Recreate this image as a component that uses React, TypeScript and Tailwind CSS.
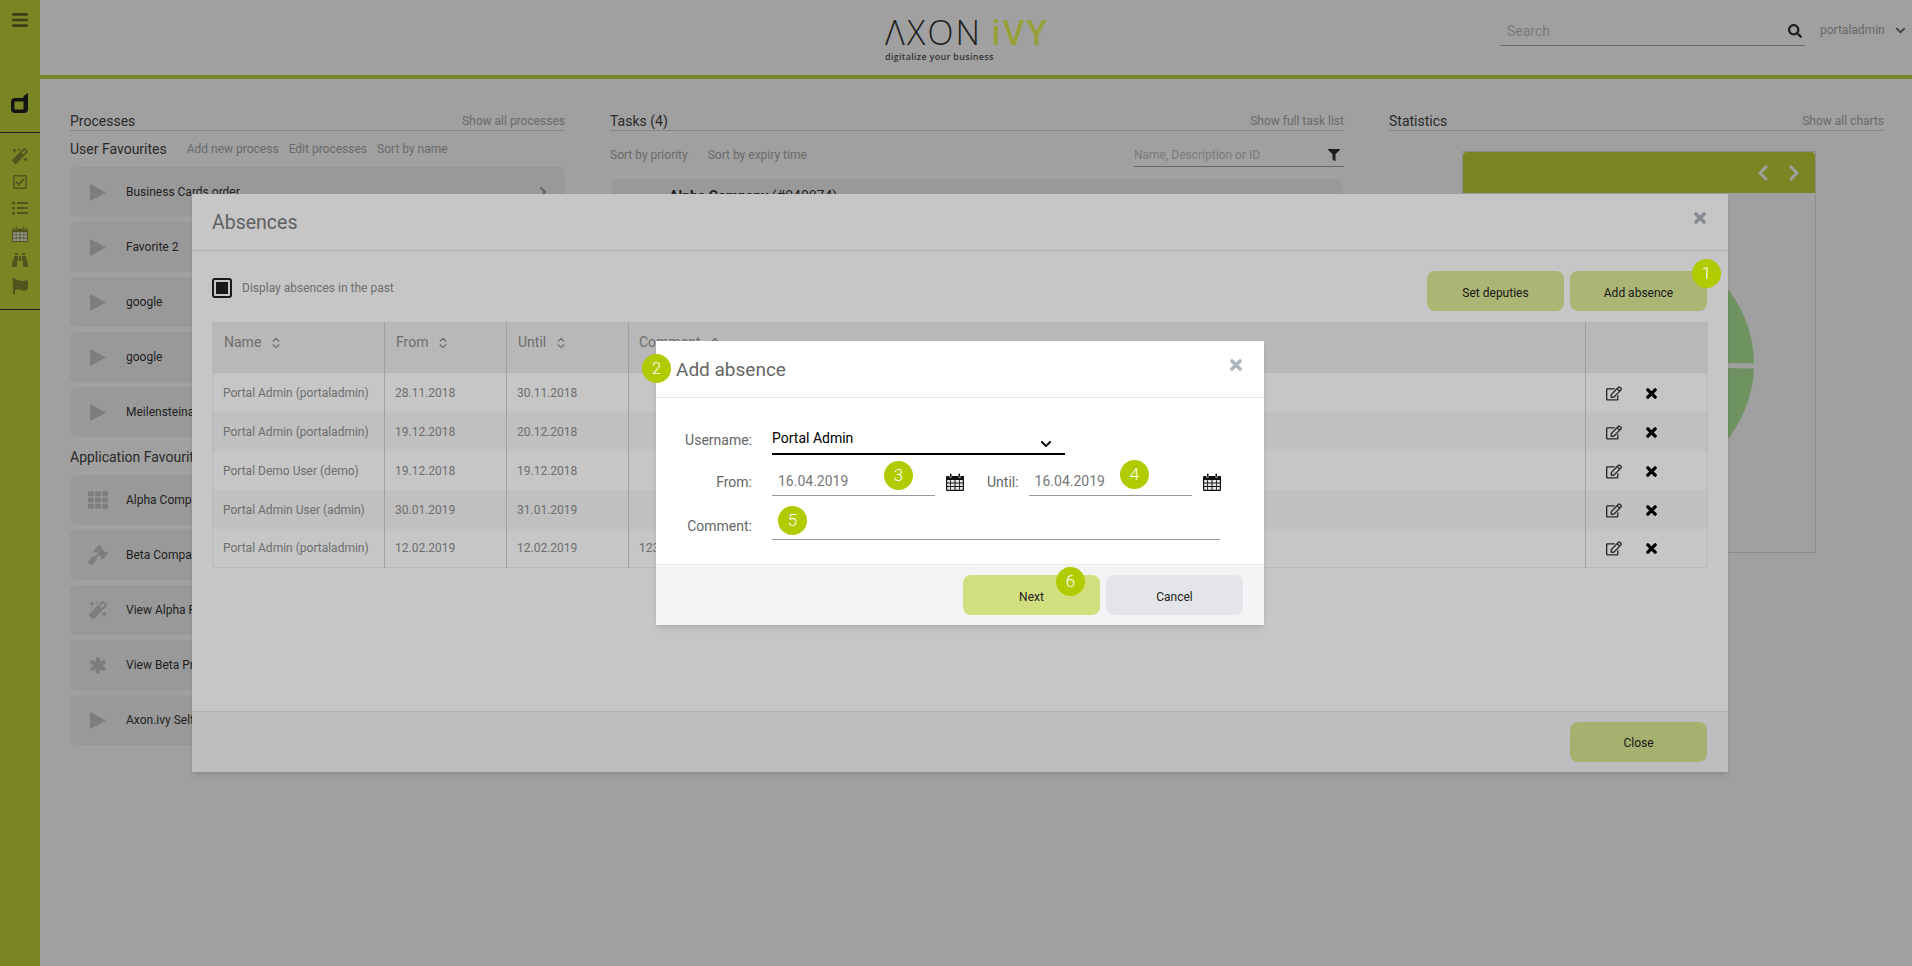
import {
  FaBars,
  FaBinoculars,
  FaChevronDown,
  FaChevronLeft,
  FaChevronRight,
  FaFilter,
  FaFlag,
  FaGavel,
  FaListUl,
  FaMagic,
  FaRegCheckSquare,
  FaRegEdit,
  FaSearch,
  FaTh,
} from "react-icons/fa";
import { ChevronsUpDown } from "lucide-react";
import type { ComponentType } from "react";

type IconProps = { className?: string };

function PlayIcon({ className }: IconProps) {
  return (
    <svg viewBox="0 0 16 17" className={className} fill="currentColor">
      <path d="M0 0 16 8.5 0 17z" />
    </svg>
  );
}

function AsteriskIcon({ className }: IconProps) {
  return (
    <svg viewBox="0 0 16 17" className={className} stroke="currentColor" strokeWidth="4.2" strokeLinecap="round">
      <path d="M8 2.2v12.6M2.5 5.3l11 6.4M13.5 5.3l-11 6.4" />
    </svg>
  );
}

function XIcon({ className }: IconProps) {
  return (
    <svg viewBox="0 0 12 12" className={className} stroke="currentColor" strokeWidth="3.6" strokeLinecap="round">
      <path d="M2 2l8 8M10 2l-8 8" />
    </svg>
  );
}

const USER_FAVOURITES = ["Business Cards order", "Favorite 2", "google", "google", "Meilensteinantrag"];

const APP_FAVOURITES: { label: string; icon: ComponentType<IconProps>; size: string }[] = [
  { label: "Alpha Company", icon: FaTh, size: "w-5 h-5" },
  { label: "Beta Company", icon: FaGavel, size: "w-5 h-5" },
  { label: "View Alpha Processes", icon: FaMagic, size: "w-[18px] h-[18px]" },
  { label: "View Beta Processes", icon: AsteriskIcon, size: "w-4 h-[17px]" },
  { label: "Axon.ivy Self Service", icon: PlayIcon, size: "w-4 h-[17px]" },
];

const ABSENCES = [
  { name: "Portal Admin (portaladmin)", from: "28.11.2018", until: "30.11.2018", comment: "" },
  { name: "Portal Admin (portaladmin)", from: "19.12.2018", until: "20.12.2018", comment: "" },
  { name: "Portal Demo User (demo)", from: "19.12.2018", until: "19.12.2018", comment: "" },
  { name: "Portal Admin User (admin)", from: "30.01.2019", until: "31.01.2019", comment: "" },
  { name: "Portal Admin (portaladmin)", from: "12.02.2019", until: "12.02.2019", comment: "123" },
];

function CalendarIcon({ className }: IconProps) {
  return (
    <svg viewBox="0 0 18 18" className={className} fill="currentColor">
      <path d="M1.5 3h2v1.5h2V3h7v1.5h2V3h2A1 1 0 0 1 18 4v13a1 1 0 0 1-1 1H1a1 1 0 0 1-1-1V4a1 1 0 0 1 1-1z" />
      <rect x="4" y="0.5" width="1.5" height="3.5" rx="0.7" />
      <rect x="12.5" y="0.5" width="1.5" height="3.5" rx="0.7" />
      <path
        fill="#fff"
        fillOpacity="0.9"
        d="M1.2 7h3v2.5h-3zM5 7h3.5v2.5H5zM9.5 7H13v2.5H9.5zM13.8 7h3v2.5h-3zM1.2 10.4h3v2.6h-3zM5 10.4h3.5v2.6H5zM9.5 10.4H13v2.6H9.5zM13.8 10.4h3v2.6h-3zM1.2 14h3v2.8h-3zM5 14h3.5v2.8H5zM9.5 14H13v2.8H9.5zM13.8 14h3v2.8h-3z"
      />
    </svg>
  );
}

function Sidebar() {
  return (
    <aside className="w-10 shrink-0 bg-[#c2d639] text-[#7f8733] flex flex-col">
      <div className="h-[133px] border-b border-[#333] flex flex-col items-center">
        <FaBars className="w-[18px] h-[18px] mt-[11px] text-[#5f6628]" />
        <svg viewBox="0 0 18 20" className="w-[18px] h-5 mt-[64px] text-[#222]" fill="currentColor">
          <path d="M17 0v16a4 4 0 0 1-4 4H4a4 4 0 0 1-4-4V9a4 4 0 0 1 4-4h8.5V3zM4 8.5a.5.5 0 0 0-.5.5v7a.5.5 0 0 0 .5.5h8.5v-8z" />
        </svg>
      </div>
      <div className="h-[177px] border-b border-[#333] flex flex-col items-center pt-[15px] gap-[10px]">
        <FaMagic className="w-4 h-4" />
        <FaRegCheckSquare className="w-4 h-4" />
        <FaListUl className="w-4 h-4" />
        <CalendarIcon className="w-4 h-4" />
        <FaBinoculars className="w-4 h-4" />
        <FaFlag className="w-4 h-4" />
      </div>
    </aside>
  );
}

function Header() {
  return (
    <header className="h-[79px] border-b-4 border-[#c2d639] flex items-start relative shrink-0">
      <div className="absolute left-[845px] top-[12px] leading-none">
        <div className="text-[34px] font-light tracking-[2.2px] text-[#333] font-['Open_Sans',sans-serif] h-[40px] leading-[40px] whitespace-nowrap">
          ΛXON <span className="font-semibold text-[#f0ff58] -ml-[2px]">iVY</span>
        </div>
        <div className="text-[9px] font-semibold tracking-[0.3px] text-[#555] font-['Open_Sans',sans-serif]">
          digitalize your business
        </div>
      </div>
      <div className="ml-auto mt-[17px] flex items-start">
        <div className="w-[305px] h-[29px] border-b border-[#aaa] flex items-center pl-[7px] pr-[3px]">
          <input
            placeholder="Search"
            className="flex-1 min-w-0 text-[14px] outline-none bg-transparent placeholder:text-[#c4c4c4]"
          />
          <FaSearch className="w-[14px] h-[14px] text-[#333]" />
        </div>
        <div className="ml-[15px] w-[92px] h-[26px] flex items-center text-[12px] text-[#a5a5a5]">
          portaladmin
          <FaChevronDown className="w-[11px] h-[11px] ml-[10px] text-[#666]" />
        </div>
      </div>
    </header>
  );
}

function SectionTitle({ title, link }: { title: string; link: string }) {
  return (
    <div className="h-[20px] border-b border-[#d6d6d6] flex items-start justify-between">
      <span className="text-[14px] leading-[20px] text-[#444]">{title}</span>
      <span className="text-[12px] leading-[20px] text-[#a9a9a9]">{link}</span>
    </div>
  );
}

function ProcessRow({
  label,
  icon: Icon,
  size,
  chevron,
}: {
  label: string;
  icon: ComponentType<IconProps>;
  size: string;
  chevron?: boolean;
}) {
  return (
    <div className="h-[50px] rounded-md bg-[#f3f3f3] flex items-center">
      <div className="w-[56px] flex justify-center">
        <Icon className={`${size} text-[#c8c8c8]`} />
      </div>
      <span className="text-[12px] text-[#363636]">{label}</span>
      {chevron && <FaChevronRight className="ml-auto mr-[17px] w-[10px] h-[12px] text-[#999]" />}
    </div>
  );
}

function Dashboard() {
  return (
    <div className="flex gap-[45px] pl-[30px] pr-[28px] pt-[32px]">
      <section className="w-[495px] shrink-0">
        <SectionTitle title="Processes" link="Show all processes" />
        <div className="flex items-center h-[36px] text-[12px] text-[#a9a9a9]">
          <span className="text-[14px] text-[#444] mr-5">User Favourites</span>
          <span className="mr-[10px]">Add new process</span>
          <span className="mr-[10px]">Edit processes</span>
          <span>Sort by name</span>
        </div>
        <div className="flex flex-col gap-[5px]">
          {USER_FAVOURITES.map((label, i) => (
            <ProcessRow key={i} label={label} icon={PlayIcon} size="w-4 h-[17px]" chevron={i === 0} />
          ))}
        </div>
        <div className="text-[14px] text-[#444] h-[38px] pt-[2px] flex items-center">Application Favourites</div>
        <div className="flex flex-col gap-[5px]">
          {APP_FAVOURITES.map((a) => (
            <ProcessRow key={a.label} label={a.label} icon={a.icon} size={a.size} />
          ))}
        </div>
      </section>

      <section className="w-[734px] shrink-0">
        <SectionTitle title="Tasks (4)" link="Show full task list" />
        <div className="flex items-center h-[36px] pt-[12px] text-[12px] text-[#a9a9a9]">
          <span className="mr-5">Sort by priority</span>
          <span>Sort by expiry time</span>
          <div className="ml-auto w-[210px] h-[24px] border-b border-[#a5a5a5] flex items-center justify-between">
            <span className="text-[#c4c4c4]">Name, Description or ID</span>
            <FaFilter className="w-3 h-3 mr-[4px] text-[#333]" />
          </div>
        </div>
        <div className="mt-[12px] mx-[2px] h-[60px] rounded-md bg-[#f3f3f3] pl-[57px] pt-[7px] text-[14px] text-[#363636]">
          <span className="font-bold">Alpha Company</span> (#040874)
        </div>
      </section>

      <section className="w-[495px] shrink-0">
        <SectionTitle title="Statistics" link="Show all charts" />
        <div className="mt-[20px] ml-[73px] w-[354px] h-[402px] border border-[#e0e0e0] flex flex-col">
          <div className="h-[41px] bg-[#c2d639] rounded-t-sm flex items-center justify-end gap-[17px] pr-[14px] text-white shrink-0">
            <FaChevronLeft className="w-[14px] h-[18px]" />
            <FaChevronRight className="w-[14px] h-[18px]" />
          </div>
          <svg viewBox="0 0 352 359" className="w-[352px] h-[359px]">
            <circle cx="170" cy="171" r="121" fill="#b1e99c" />
            <path d="M170 171 L292 173" stroke="#fff" strokeWidth="5" />
          </svg>
        </div>
      </section>
    </div>
  );
}

function SortHeader({ label }: { label: string }) {
  return (
    <span className="flex items-center gap-2">
      {label}
      <ChevronsUpDown className="w-[14px] h-[14px] text-[#8e8e8e]" />
    </span>
  );
}

function AbsencesTable() {
  return (
    <table className="w-[1495px] table-fixed border-collapse mt-[11px] text-[#8e8e8e] border border-[#efefef]">
      <colgroup>
        <col className="w-[172px]" />
        <col className="w-[122px]" />
        <col className="w-[122px]" />
        <col className="w-[957px]" />
        <col className="w-[122px]" />
      </colgroup>
      <thead>
        <tr className="h-[50px] bg-[#ededed] text-[14px] text-left align-top">
          <th className="font-normal px-[11px] pt-[9px] border-r border-[#cfcfcf]">
            <SortHeader label="Name" />
          </th>
          <th className="font-normal px-[11px] pt-[9px] border-r border-[#cfcfcf]">
            <SortHeader label="From" />
          </th>
          <th className="font-normal px-[11px] pt-[9px] border-r border-[#cfcfcf]">
            <SortHeader label="Until" />
          </th>
          <th className="font-normal px-[10px] pt-[9px] border-r border-[#cfcfcf]">
            <SortHeader label="Comment" />
          </th>
          <th />
        </tr>
      </thead>
      <tbody className="text-[12px]">
        {ABSENCES.map((a, i) => (
          <tr key={i} className={`h-[39px] ${i % 2 ? "bg-[#f7f7f7]" : "bg-white"}`}>
            <td className="px-[10px] pt-[1px] border-r border-[#cfcfcf] whitespace-nowrap">{a.name}</td>
            <td className="px-[10px] pt-[1px] border-r border-[#cfcfcf]">{a.from}</td>
            <td className="px-[10px] pt-[1px] border-r border-[#cfcfcf]">{a.until}</td>
            <td className="px-[10px] pt-[1px] border-r border-[#cfcfcf]">{a.comment}</td>
            <td>
              <div className="flex items-center pl-[20px] pt-[2px] gap-[24px]">
                <FaRegEdit className="w-[16px] h-[15px] text-[#333]" />
                <XIcon className="w-[11px] h-[11px] text-black" />
              </div>
            </td>
          </tr>
        ))}
      </tbody>
    </table>
  );
}

function AbsencesDialog() {
  return (
    <div className="absolute left-[192px] top-[194px] w-[1536px] h-[578px] bg-white shadow-md flex flex-col">
      <div className="h-[57px] shrink-0 border-b border-[#e6e6e6] flex items-start justify-between px-5">
        <h2 className="text-[19.5px] leading-[58px] text-[#7d7d7d]">Absences</h2>
        <XIcon className="w-3 h-3 mt-[18px] mr-[2px] text-[#adb5bd]" />
      </div>
      <div className="flex-1 px-5 pt-5">
        <div className="flex items-start justify-between">
          <label className="flex items-center gap-[10px] mt-[7px] text-[12px] text-[#8e8e8e]">
            <span className="w-5 h-5 rounded-[3px] border-2 border-[#222] p-[2px]">
              <span className="block w-full h-full bg-[#222]" />
            </span>
            Display absences in the past
          </label>
          <div className="flex gap-[6px] mr-[1px]">
            <button className="w-[137px] h-10 pt-[3px] rounded-lg bg-[#deeb96] text-[12px] text-[#222]">Set deputies</button>
            <button className="w-[137px] h-10 pt-[3px] rounded-lg bg-[#deeb96] text-[12px] text-[#222]">Add absence</button>
          </div>
        </div>
        <AbsencesTable />
      </div>
      <div className="h-[61px] shrink-0 bg-[#f3f4f6] border-t border-[#e6e6e6] flex justify-end pt-[10px] pr-[21px]">
        <button className="w-[137px] h-10 pt-[2px] rounded-lg bg-[#d8e48f] text-[12px] text-[#222]">Close</button>
      </div>
    </div>
  );
}

function FieldLabel({ children }: { children: string }) {
  return <span className="w-[96px] text-right text-[14px] text-[#666]">{children}</span>;
}

function DateField() {
  return (
    <div className="w-[163px] h-[28px] border-b border-[#999] pl-[6px] text-[14px] text-[#777] leading-[26px]">
      16.04.2019
    </div>
  );
}

function AddAbsenceDialog() {
  return (
    <div className="absolute left-[656px] top-[341px] w-[608px] h-[284px] bg-white shadow-md flex flex-col">
      <div className="h-[57px] shrink-0 border-b border-[#e6e6e6] flex items-start justify-between pl-5 pr-[22px]">
        <h2 className="text-[19px] leading-[57px] text-[#666]">Add absence</h2>
        <XIcon className="w-3 h-3 mt-[18px] text-[#adb5bd]" />
      </div>
      <div className="flex-1 pt-[28px]">
        <div className="flex items-center h-[28px]">
          <FieldLabel>Username:</FieldLabel>
          <div className="ml-5 w-[293px] h-[29px] border-b-2 border-black text-[14px] text-black flex justify-between pr-[12px] leading-[24px]">
            Portal Admin
            <FaChevronDown className="w-[14px] h-[12px] mt-[12px]" />
          </div>
        </div>
        <div className="flex items-center h-[28px] mt-[14px]">
          <FieldLabel>From:</FieldLabel>
          <div className="ml-5">
            <DateField />
          </div>
          <CalendarIcon className="w-[18px] h-[18px] ml-[11px] text-[#111]" />
          <span className="ml-[23px] text-[14px] text-[#666]">Until:</span>
          <div className="ml-[10px]">
            <DateField />
          </div>
          <CalendarIcon className="w-[18px] h-[18px] ml-[11px] text-[#111]" />
        </div>
        <div className="flex items-center h-[28px] mt-[16px]">
          <FieldLabel>Comment:</FieldLabel>
          <div className="ml-5 w-[448px] h-[28px] border-b border-[#999]" />
        </div>
      </div>
      <div className="h-[61px] shrink-0 bg-[#f3f4f6] border-t border-[#e9e9e9] flex justify-end gap-[6px] pt-[10px] pr-[21px]">
        <button className="w-[137px] h-10 pt-[3px] rounded-lg bg-[#d2df7f] text-[12px] text-[#222]">Next</button>
        <button className="w-[137px] h-10 pt-[3px] rounded-lg bg-[#e4e5e8] text-[12px] text-[#222]">Cancel</button>
      </div>
    </div>
  );
}

function Badge({ n, className }: { n: number; className: string }) {
  return (
    <span
      className={`absolute w-[29px] h-[29px] rounded-full bg-[#b0cb00] text-white text-[17px] font-light flex items-center justify-center ${className}`}
    >
      {n}
    </span>
  );
}

export default function App() {
  return (
    <div className="relative w-full h-screen overflow-hidden bg-white flex font-['Roboto',sans-serif]">
      <Sidebar />
      <main className="flex-1 min-w-0 flex flex-col">
        <Header />
        <Dashboard />
      </main>

      <div className="absolute inset-0 bg-black/[0.19]" />
      <AbsencesDialog />
      <div className="absolute inset-0 bg-black/[0.224]" />
      <AddAbsenceDialog />

      <Badge n={1} className="left-[1692px] top-[259px]" />
      <Badge n={2} className="left-[642px] top-[354px]" />
      <Badge n={3} className="left-[884px] top-[461px]" />
      <Badge n={4} className="left-[1120px] top-[460px]" />
      <Badge n={5} className="left-[778px] top-[506px]" />
      <Badge n={6} className="left-[1056px] top-[567px]" />
    </div>
  );
}
